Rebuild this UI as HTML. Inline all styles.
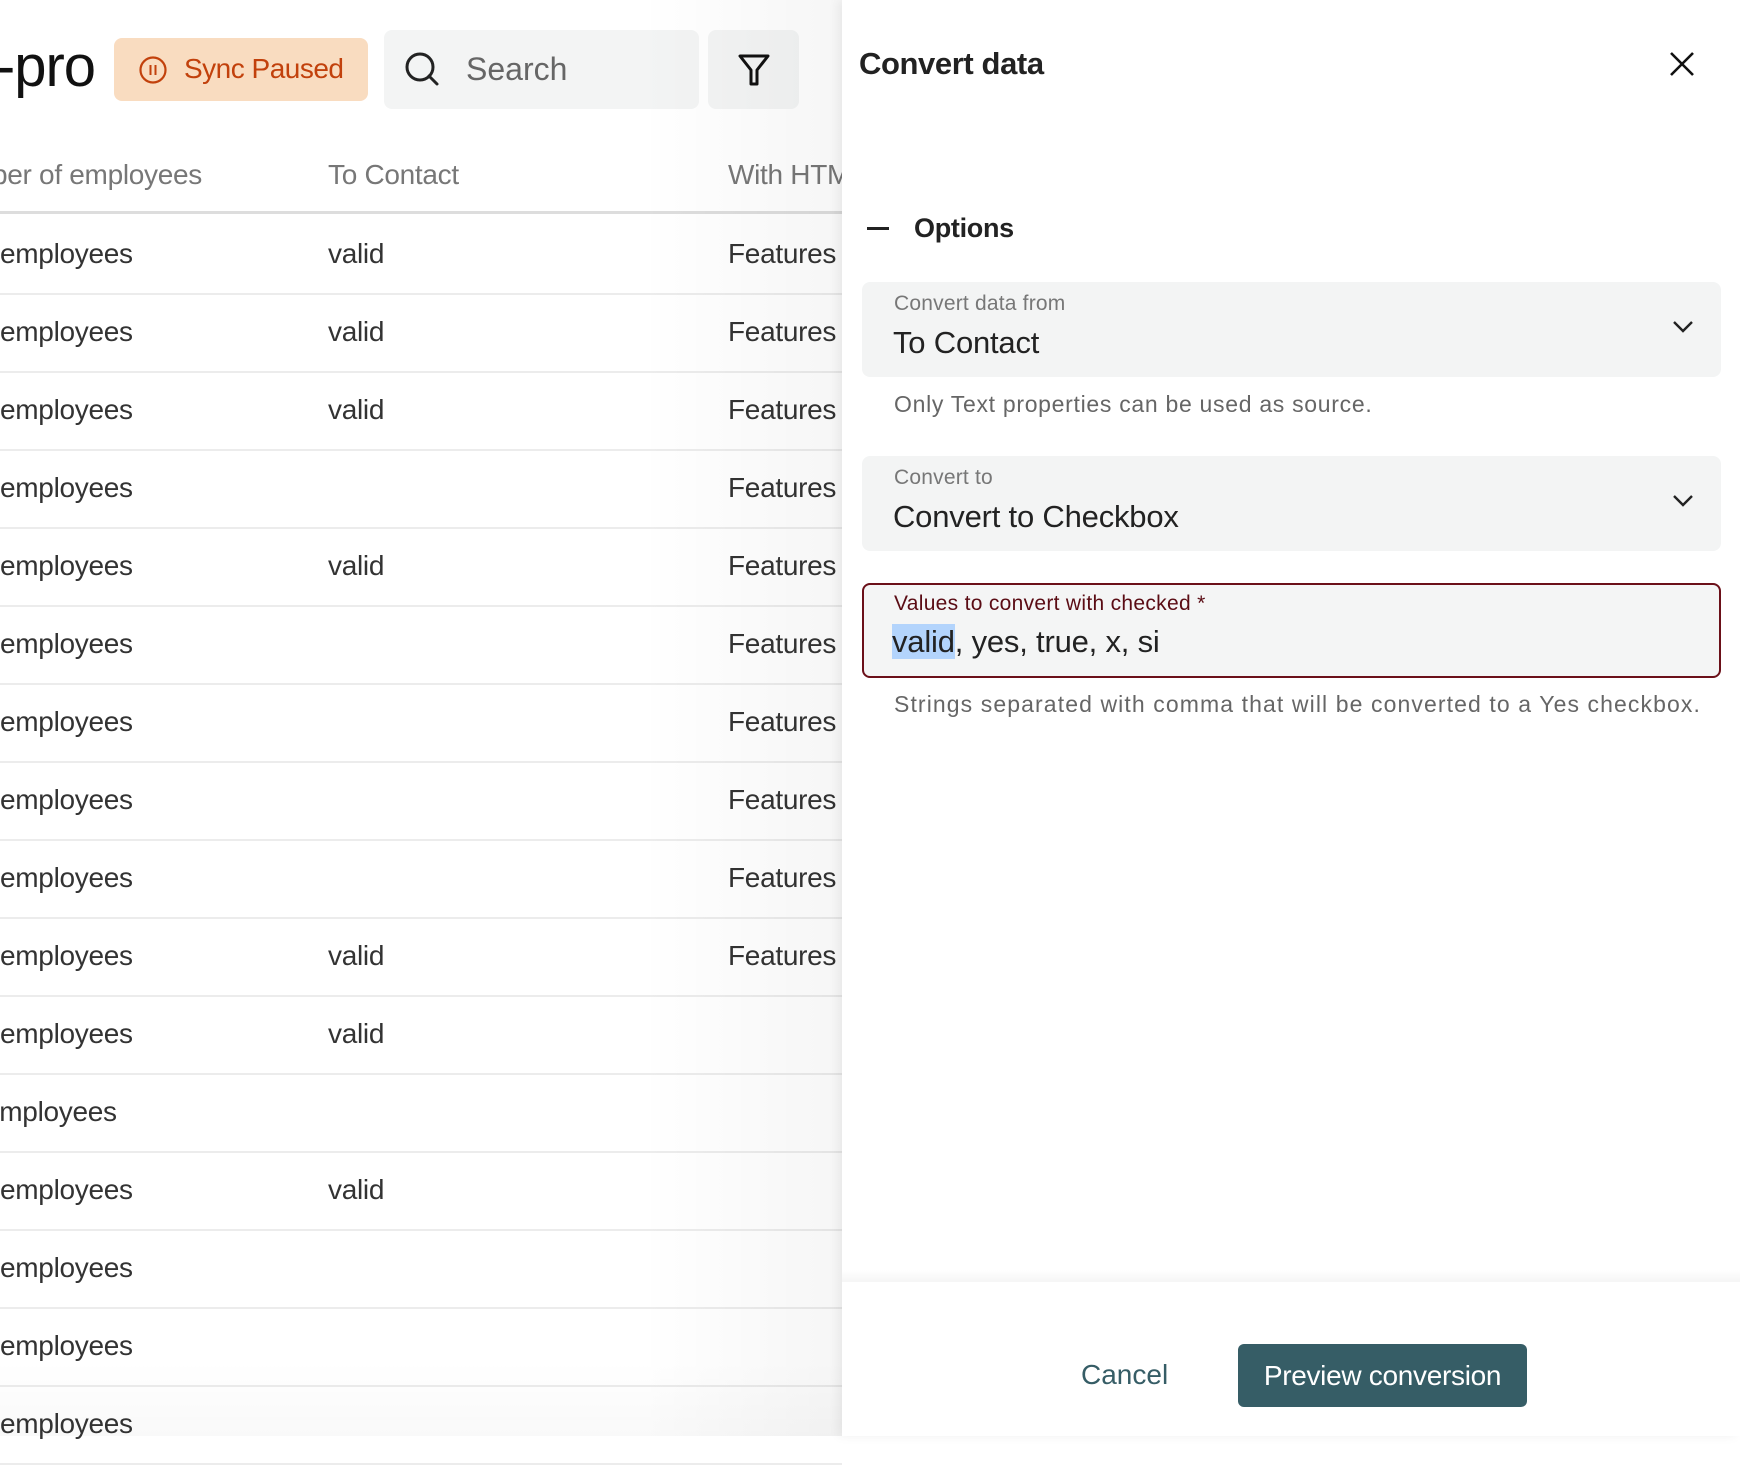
<!DOCTYPE html>
<html><head><meta charset="utf-8"><style>
*{margin:0;padding:0;box-sizing:border-box}
body{width:1740px;height:1436px;overflow:hidden;background:#fff;font-family:"Liberation Sans",Arial,sans-serif;position:relative}
.a{position:absolute;white-space:nowrap}
.cell{position:absolute;font-size:28px;color:#333;transform:translateY(-50%);white-space:nowrap;letter-spacing:-0.3px}
.line{position:absolute;left:0;width:842px;height:2px;background:#ececec}
.sel{position:absolute;left:862px;width:859px;background:#f3f4f4;border-radius:8px}
.lab{position:absolute;left:32px;font-size:21px;color:#777;letter-spacing:0.2px}
.val{position:absolute;left:31px;font-size:31px;color:#222;letter-spacing:-0.2px}
</style></head><body>
<div class="a" style="left:-16px;top:33px;font-size:58px;color:#111;letter-spacing:-1px">l-pro</div>
<div class="a" style="left:114px;top:38px;width:254px;height:63px;background:#f9dcc0;border-radius:8px"></div>
<svg class="a" style="left:138px;top:55px" width="30" height="30" viewBox="0 0 30 30"><circle cx="15" cy="15" r="12.5" fill="none" stroke="#c2410c" stroke-width="2.2"/><path d="M12.5 10v10M17.5 10v10" stroke="#c2410c" stroke-width="2"/></svg>
<div class="a" style="left:184px;top:53px;font-size:28px;color:#c2410c;letter-spacing:-0.5px">Sync Paused</div>
<div class="a" style="left:384px;top:30px;width:315px;height:79px;background:#f3f4f4;border-radius:8px"></div>
<svg class="a" style="left:402px;top:49px" width="40" height="40" viewBox="0 0 40 40"><circle cx="18" cy="18" r="13" fill="none" stroke="#222" stroke-width="3"/><path d="M27 27l8 8" stroke="#222" stroke-width="3" stroke-linecap="round"/></svg>
<div class="a" style="left:466px;top:51px;font-size:32px;color:#666">Search</div>
<div class="a" style="left:708px;top:30px;width:91px;height:79px;background:#f3f4f4;border-radius:8px"></div>
<svg class="a" style="left:736px;top:52px" width="36" height="36" viewBox="0 0 36 36"><path d="M4 4h28L21 18v14h-6V18Z" fill="none" stroke="#111" stroke-width="3" stroke-linejoin="round"/></svg>
<div class="cell" style="left:-8px;top:175px;color:#777">ber of employees</div>
<div class="cell" style="left:328px;top:175px;color:#777">To Contact</div>
<div class="cell" style="left:728px;top:175px;color:#777">With HTML</div>
<div class="line" style="top:211px;height:3px;background:#ddd"></div>
<div id="rows"></div>
<script>
var tc=[1,1,1,0,1,0,0,0,0,1,1,0,1,0,0,0];var h='';
for(var i=0;i<16;i++){var c=254+i*78;
h+='<div class="cell" style="left:'+(i==11?-16:0)+'px;top:'+c+'px">employees</div>';
if(tc[i])h+='<div class="cell" style="left:328px;top:'+c+'px">valid</div>';
if(i<10)h+='<div class="cell" style="left:728px;top:'+c+'px">Features</div>';
h+='<div class="line" style="top:'+(c+39)+'px"></div>';}
document.getElementById('rows').innerHTML=h;
</script>
<div class="a" style="left:640px;top:0;width:202px;height:1436px;background:linear-gradient(90deg,rgba(0,0,0,0),rgba(0,0,0,0.035))"></div>
<div class="a" style="left:0;top:1360px;width:842px;height:76px;background:linear-gradient(180deg,rgba(0,0,0,0),rgba(0,0,0,0.025))"></div>
<div class="a" style="left:842px;top:0;width:898px;height:1436px;background:#fff;box-shadow:-4px 0 10px rgba(0,0,0,0.06)"></div>
<div class="a" style="left:859px;top:46px;font-size:31px;font-weight:bold;color:#222;letter-spacing:-0.4px">Convert data</div>
<svg class="a" style="left:1668px;top:50px" width="28" height="28" viewBox="0 0 28 28"><path d="M3 3l22 22M25 3L3 25" stroke="#111" stroke-width="2.6"/></svg>
<div class="a" style="left:867px;top:227px;width:22px;height:3px;background:#222"></div>
<div class="a" style="left:914px;top:213px;font-size:27px;font-weight:bold;color:#222;letter-spacing:-0.3px">Options</div>
<div class="sel" style="top:282px;height:95px"><div class="lab" style="top:10px">Convert data from</div><div class="val" style="top:43px">To Contact</div>
<svg class="a" style="left:810px;top:38px" width="22" height="14" viewBox="0 0 22 14"><path d="M2 2l9 9 9-9" fill="none" stroke="#222" stroke-width="2.4"/></svg></div>
<div class="a" style="left:894px;top:391px;font-size:23px;color:#666;letter-spacing:0.7px">Only Text properties can be used as source.</div>
<div class="sel" style="top:456px;height:95px"><div class="lab" style="top:10px">Convert to</div><div class="val" style="top:43px">Convert to Checkbox</div>
<svg class="a" style="left:810px;top:38px" width="22" height="14" viewBox="0 0 22 14"><path d="M2 2l9 9 9-9" fill="none" stroke="#222" stroke-width="2.4"/></svg></div>
<div class="sel" style="top:583px;height:95px;border:2px solid #6b1019;background:#f4f5f5"><div class="lab" style="top:7px;left:30px;color:#5a0c14;letter-spacing:0.3px">Values to convert with checked *</div><div class="val" style="top:39px;left:28px"><span style="background:#b3d4fc">valid</span>, yes, true, x, si</div></div>
<div class="a" style="left:894px;top:691px;font-size:23px;color:#666;letter-spacing:1.1px">Strings separated with comma that will be converted to a Yes checkbox.</div>
<div class="a" style="left:842px;top:1270px;width:898px;height:12px;background:linear-gradient(180deg,rgba(0,0,0,0),rgba(0,0,0,0.04))"></div>
<div class="a" style="left:1081px;top:1359px;font-size:28px;color:#365d66">Cancel</div>
<div class="a" style="left:1238px;top:1344px;width:289px;height:63px;background:#365d66;border-radius:6px;color:#fff;font-size:28px;text-align:center;line-height:63px;letter-spacing:-0.3px">Preview conversion</div>
</body></html>
